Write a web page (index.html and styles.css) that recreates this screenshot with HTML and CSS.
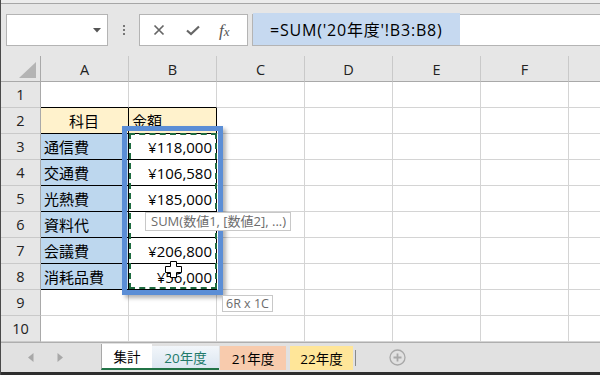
FILE: index.html
```html
<!DOCTYPE html>
<html lang="ja">
<head>
<meta charset="utf-8">
<title>Excel</title>
<link rel="stylesheet" href="styles.css">
</head>
<body>
<div class="app">
  <div class="topstrip"></div>
  <div class="toolbar">
    <div class="namebox">
      <svg class="dd" width="8" height="5" viewBox="0 0 8 5"><polygon points="0,0 8,0 4,4.5" fill="#555"/></svg>
    </div>
    <div class="dots"><i></i><i></i><i></i></div>
    <div class="btnbox">
      <svg class="ic" width="12" height="12" viewBox="0 0 12 12"><path d="M1.5 1.5 L10.5 10.5 M10.5 1.5 L1.5 10.5" stroke="#666" stroke-width="1.7" fill="none"/></svg>
      <svg class="ic" width="14" height="11" viewBox="0 0 14 11"><path d="M1 5.5 L5 9 L13 1.5" stroke="#666" stroke-width="2.2" fill="none"/></svg>
      <span class="fx"><i>f</i><i class="x">x</i></span>
    </div>
    <div class="formula"><span class="hl">=SUM('20年度'!B3:B8)</span></div>
  </div>

  <div class="sheet">
    <div class="grid">
      <div class="corner"><svg width="18" height="16" viewBox="0 0 18 16"><polygon points="17,0 17,16 0,16" fill="#b4b4b4"/></svg></div>
      <div class="ch">A</div><div class="ch">B</div><div class="ch">C</div><div class="ch">D</div><div class="ch">E</div><div class="ch">F</div><div class="ch last"></div>

      <div class="rh">1</div><div class="c bb"></div><div class="c bb"></div><div class="c"></div><div class="c"></div><div class="c"></div><div class="c"></div><div class="c last"></div>

      <div class="rh">2</div><div class="c k hdr center">科目</div><div class="c k hdr">金額</div><div class="c"></div><div class="c"></div><div class="c"></div><div class="c"></div><div class="c last"></div>

      <div class="rh">3</div><div class="c k item">通信費</div><div class="c k num">¥118,000</div><div class="c"></div><div class="c"></div><div class="c"></div><div class="c"></div><div class="c last"></div>

      <div class="rh">4</div><div class="c k item">交通費</div><div class="c k num">¥106,580</div><div class="c"></div><div class="c"></div><div class="c"></div><div class="c"></div><div class="c last"></div>

      <div class="rh">5</div><div class="c k item">光熱費</div><div class="c k num">¥185,000</div><div class="c"></div><div class="c"></div><div class="c"></div><div class="c"></div><div class="c last"></div>

      <div class="rh">6</div><div class="c k item">資料代</div><div class="c k num"></div><div class="c"></div><div class="c"></div><div class="c"></div><div class="c"></div><div class="c last"></div>

      <div class="rh">7</div><div class="c k item">会議費</div><div class="c k num">¥206,800</div><div class="c"></div><div class="c"></div><div class="c"></div><div class="c"></div><div class="c last"></div>

      <div class="rh">8</div><div class="c k item">消耗品費</div><div class="c k num">¥56,000</div><div class="c"></div><div class="c"></div><div class="c"></div><div class="c"></div><div class="c last"></div>

      <div class="rh">9</div><div class="c"></div><div class="c"></div><div class="c"></div><div class="c"></div><div class="c"></div><div class="c"></div><div class="c last"></div>

      <div class="rh">10</div><div class="c"></div><div class="c"></div><div class="c"></div><div class="c"></div><div class="c"></div><div class="c"></div><div class="c last"></div>
    </div>

    <div class="dragbox"></div>
    <div class="marquee"></div>
    <div class="tip sumtip">SUM(数値1, [数値2], ...)</div>
    <div class="tip sizetip">6R x 1C</div>
    <svg class="cursor" width="17" height="17" viewBox="0 0 17 17"><path d="M5.5 0.5 H11.5 V5.5 H16.5 V11.5 H11.5 V16.5 H5.5 V11.5 H0.5 V5.5 H5.5 Z" fill="#fff" stroke="#000" stroke-width="1"/></svg>
  </div>

  <div class="tabbar">
    <div class="nav">
      <svg width="6" height="9" viewBox="0 0 6 9"><polygon points="5.5,0 5.5,9 0,4.5" fill="#a8a8a8"/></svg>
      <svg width="6" height="9" viewBox="0 0 6 9"><polygon points="0.5,0 0.5,9 6,4.5" fill="#a8a8a8"/></svg>
    </div>
    <div class="tab t-sum">集計</div>
    <div class="tab t-20">20年度</div>
    <div class="tab t-21">21年度</div>
    <div class="tab t-22">22年度</div>
    <div class="sep"></div>
    <svg class="add" width="17" height="17" viewBox="0 0 17 17"><circle cx="8.5" cy="8.5" r="7.5" fill="none" stroke="#a8a8a8" stroke-width="1.3"/><path d="M8.5 4.5 V12.5 M4.5 8.5 H12.5" stroke="#a8a8a8" stroke-width="1.8"/></svg>
  </div>
  <div class="bottomstrip"></div>
</div>
</body>
</html>
```

FILE: styles.css
```css
html, body {
  margin: 0;
  padding: 0;
  width: 600px;
  height: 375px;
  overflow: hidden;
  background: #e6e6e6;
  font-family: "Open Sans", "Noto Sans CJK JP", sans-serif;
  color: #000;
}

.app {
  width: 600px;
  height: 375px;
  display: flex;
  flex-direction: column;
  border-left: 1px solid #4a4a4a;
  box-sizing: border-box;
}

.topstrip {
  height: 3px;
  background: #ececec;
  border-bottom: 1px solid #a6a6a6;
}

.toolbar {
  height: 52px;
  box-sizing: border-box;
  padding: 10px 0 10px 5px;
  display: flex;
  align-items: stretch;
  background: #e6e6e6;
}

.namebox {
  width: 102px;
  box-sizing: border-box;
  background: #fff;
  border: 1px solid #b4b4b4;
  display: flex;
  align-items: center;
  justify-content: flex-end;
  padding-right: 6px;
}

.dots {
  width: 31px;
  display: flex;
  flex-direction: column;
  align-items: center;
  justify-content: center;
  gap: 2px;
}
.dots i {
  width: 2px;
  height: 2px;
  background: #777;
  display: block;
}

.btnbox {
  width: 109px;
  box-sizing: border-box;
  background: #fff;
  border: 1px solid #b4b4b4;
  display: flex;
  align-items: center;
  padding-left: 13px;
  gap: 22px;
}
.btnbox .ic:nth-child(2) { margin-left: -1px; }
.fx {
  font-family: "Liberation Serif", serif;
  font-size: 17px;
  color: #555;
  margin-left: -3px;
  line-height: 1;
}
.fx i { font-style: italic; }
.fx .x { font-size: 13px; }

.formula {
  flex: 1;
  margin-left: 4px;
  background: #fff;
  border-top: 1px solid #b4b4b4;
  border-bottom: 1px solid #b4b4b4;
  border-left: 1px solid #b4b4b4;
  display: flex;
  align-items: stretch;
}
.hl {
  background: #c6d9f0;
  padding: 0 17px 0 17px;
  display: flex;
  align-items: center;
  font-size: 16px;
  letter-spacing: 0.8px;
  margin-top: -2px;
}

.sheet {
  position: relative;
  height: 286px;
  background: #fff;
}

.grid {
  display: grid;
  grid-template-columns: 40px repeat(6, 88px) 31px;
  grid-auto-rows: 26px;
}

.grid > div {
  box-sizing: border-box;
}

.corner {
  background: #e6e6e6;
  border-right: 1px solid #a9a9a9;
  border-bottom: 1px solid #a9a9a9;
  display: flex;
  align-items: flex-end;
  justify-content: flex-end;
  padding: 0 3px 3px 0;
}

.ch {
  background: #e6e6e6;
  border-right: 1px solid #c9c9c9;
  border-bottom: 1px solid #a9a9a9;
  display: flex;
  align-items: center;
  justify-content: center;
  font-size: 14.5px;
  color: #222;
  padding-top: 1px;
}

.rh {
  background: #e6e6e6;
  border-right: 1px solid #a9a9a9;
  border-bottom: 1px solid #c9c9c9;
  display: flex;
  align-items: center;
  justify-content: center;
  font-size: 14.5px;
  color: #222;
}

.c {
  background: #fff;
  border-right: 1px solid #d4d4d4;
  border-bottom: 1px solid #d4d4d4;
  font-size: 15px;
  display: flex;
  align-items: center;
  padding: 0 4px 0 3px;
  white-space: nowrap;
}
.last { border-right: none; }
.bb { border-bottom-color: #000; }
.k {
  border-right-color: #000;
  border-bottom-color: #000;
}
.hdr { background: #fff2cc; }
.center { justify-content: center; }
.item { background: #bdd7ee; }
.num { justify-content: flex-end; }

.dragbox {
  position: absolute;
  left: 121px;
  top: 70px;
  width: 101px;
  height: 169px;
  box-sizing: border-box;
  border: 5px solid #5b8ed6;
  box-shadow: 3px 3px 4px rgba(0, 0, 0, 0.3);
}

.marquee {
  position: absolute;
  left: 128px;
  top: 77px;
  width: 88px;
  height: 156px;
  box-sizing: border-box;
  border: 2px dashed #1e6b3f;
}

.tip {
  position: absolute;
  background: #fff;
  border: 1px solid #c8c8c8;
  color: #6c6c6c;
  font-size: 12px;
  line-height: 16px;
  padding: 0 4px;
  white-space: nowrap;
}
.sumtip { left: 144px; top: 156px; font-size: 13px; line-height: 17px; padding: 0 4px 0 5px; }
.sizetip { left: 221px; top: 239px; line-height: 15px; padding: 0 3px; font-size: 12.5px; }

.cursor {
  position: absolute;
  left: 164px;
  top: 205px;
}

.tabbar {
  height: 30px;
  box-sizing: border-box;
  border-top: 1px solid #aeaeae;
  background: #e1e1e1;
  display: flex;
  align-items: stretch;
  padding: 1px 0 2px 0;
}

.nav {
  width: 100px;
  display: flex;
  align-items: center;
  padding-left: 27px;
  gap: 23px;
  box-sizing: border-box;
}

.tab {
  display: flex;
  align-items: center;
  justify-content: center;
  font-size: 13.5px;
  box-sizing: border-box;
}
.t-sum {
  width: 51px;
  background: #fff;
  border-left: 1px solid #a8a8a8;
  border-bottom: 2px solid #217346;
}
.t-20 {
  width: 67px;
  background: linear-gradient(#f2f6fa, #dbe6f1);
  color: #217a6a;
  border-bottom: 2px solid #217346;
  margin-top: 2px;
}
.t-21 {
  width: 66px;
  margin-left: 1px;
  background: #f8cbad;
  margin-top: 2px;
}
.t-22 {
  width: 63px;
  margin-left: 4px;
  background: #ffe699;
  margin-top: 2px;
}
.sep {
  width: 1px;
  background: #8a8a8a;
  margin: 6px 0 4px 2px;
}
.add {
  align-self: center;
  margin-left: 33px;
}

.bottomstrip {
  flex: 1;
  background: #2e2e2e;
}
```
